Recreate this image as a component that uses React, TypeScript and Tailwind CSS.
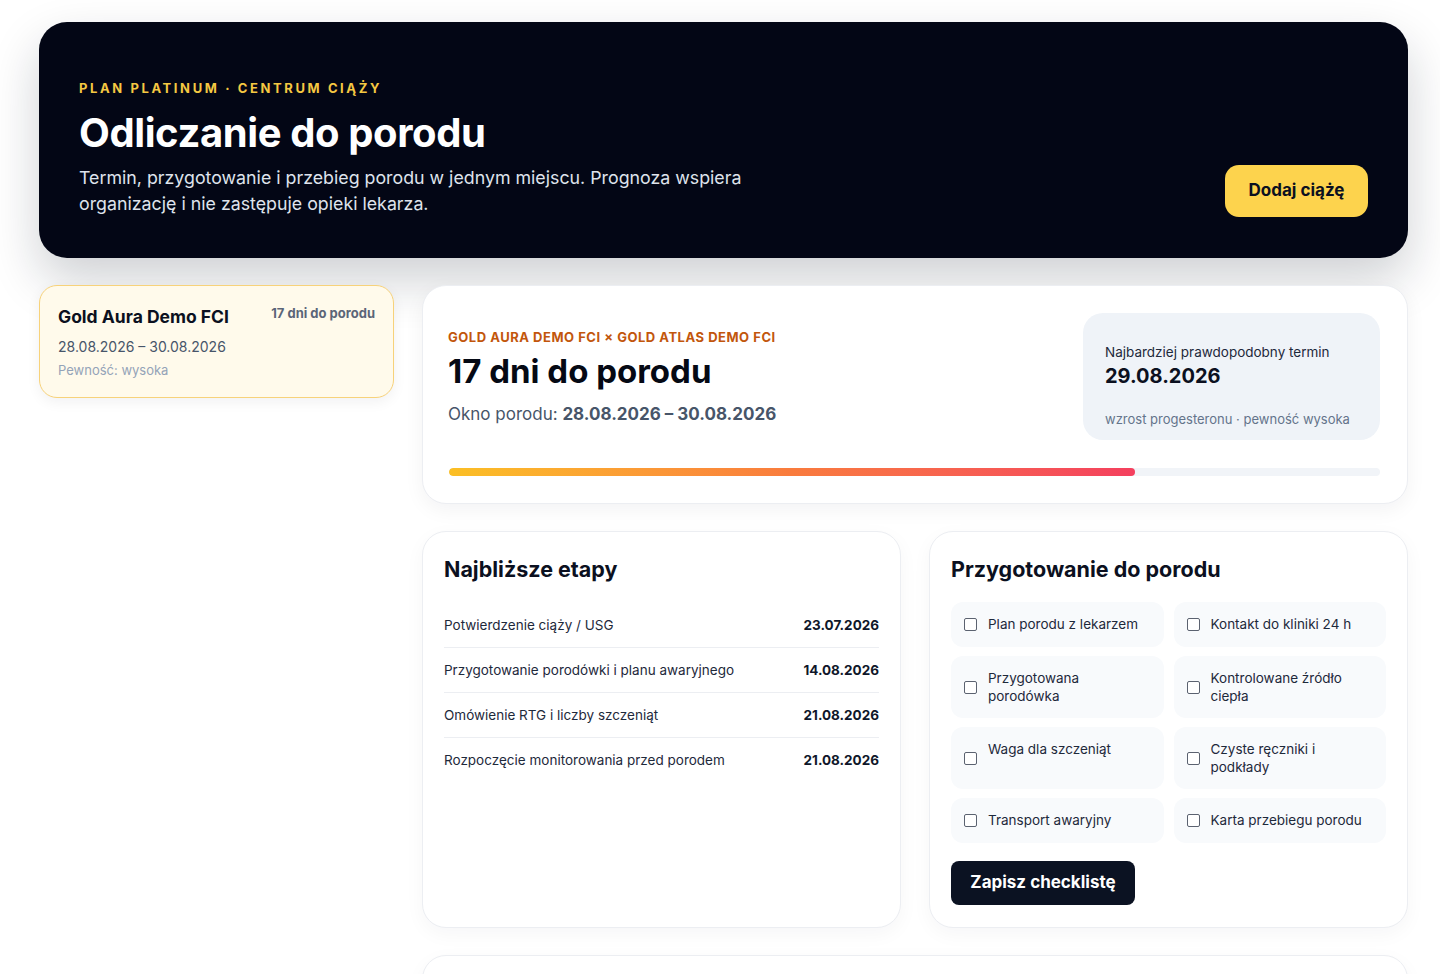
const milestones = [
  { label: 'Potwierdzenie ciąży / USG', date: '23.07.2026' },
  { label: 'Przygotowanie porodówki i planu awaryjnego', date: '14.08.2026' },
  { label: 'Omówienie RTG i liczby szczeniąt', date: '21.08.2026' },
  { label: 'Rozpoczęcie monitorowania przed porodem', date: '21.08.2026' },
];

const checklist = [
  'Plan porodu z lekarzem',
  'Kontakt do kliniki 24 h',
  'Przygotowana porodówka',
  'Kontrolowane źródło ciepła',
  'Waga dla szczeniąt',
  'Czyste ręczniki i podkłady',
  'Transport awaryjny',
  'Karta przebiegu porodu',
];

const CheckItem = ({ label }: { label: string }) => (
  <label className="flex min-h-[45px] items-center gap-[11px] rounded-xl bg-[#f8fafc] py-[13px] pl-[13px] pr-[16px]">
    <span className="h-[13px] w-[13px] shrink-0 rounded-[2px] border-[1.5px] border-[#5b6270] bg-white" />
    <span className="self-start text-[13.5px] leading-[18px] text-[#1e293b]">{label}</span>
  </label>
);

export default function App() {
  return (
    <div
      className="min-h-screen bg-white pb-10 pl-[39px] pr-[32px] pt-[22px] text-[#0f172a]"
      style={{ fontFamily: 'Inter, "Noto Sans", sans-serif' }}
    >
      {/* hero */}
      <div className="flex items-end justify-between rounded-[28px] bg-[#030615] pb-[41px] pl-[40px] pr-[40px] pt-[56px] shadow-[0_22px_50px_rgba(15,23,42,0.20)]">
        <div>
          <div className="text-[13px] font-bold leading-5 tracking-[0.2em] text-[#f5c842]">
            PLAN PLATINUM · CENTRUM CIĄŻY
          </div>
          <h1 className="mt-[11px] text-[40px] font-bold leading-[48px] tracking-[-0.01em] text-white">
            Odliczanie do porodu
          </h1>
          <p className="mt-[8px] max-w-[680px] text-[17.8px] leading-[26px] text-[#dfe3ec]">
            Termin, przygotowanie i przebieg porodu w jednym miejscu. Prognoza wspiera organizację i nie zastępuje
            opieki lekarza.
          </p>
        </div>
        <button
          type="button"
          className="h-[52px] w-[143px] rounded-[14px] bg-[#fdd34d] text-[17px] font-bold text-[#0b1020]"
        >
          Dodaj ciążę
        </button>
      </div>

      <div className="mt-[27px] flex gap-[28px]">
        {/* left column */}
        <div className="w-[355px] shrink-0">
          <div className="rounded-[18px] border border-[#f7d27a] bg-[#fffaeb] px-[18px] pb-[17px] pt-[17px] shadow-[0_4px_14px_rgba(15,23,42,0.06)]">
            <div className="flex items-start justify-between">
              <div className="text-[17.5px] font-bold leading-[28px] text-[#0b1020]">Gold Aura Demo FCI</div>
              <div className="text-[13px] font-bold leading-5 text-[#5b6578]">17 dni do porodu</div>
            </div>
            <div className="mt-[6px] text-[14px] leading-5 text-[#475569]">28.08.2026 – 30.08.2026</div>
            <div className="mt-[3px] text-[13px] leading-5 text-[#94a3b8]">Pewność: wysoka</div>
          </div>
        </div>

        {/* right column */}
        <div className="min-w-0 flex-1">
          <div className="rounded-[24px] border border-[#eceef2] bg-white py-[27px] pl-[25px] pr-[27px] shadow-[0_6px_20px_rgba(15,23,42,0.05)]">
            <div className="flex items-start justify-between">
              <div className="pt-[14px]">
                <div className="text-[13px] font-bold leading-5 tracking-[0.04em] text-[#c2560c]">
                  GOLD AURA DEMO FCI × GOLD ATLAS DEMO FCI
                </div>
                <div className="mt-[4px] text-[33px] font-bold leading-[40px] text-[#050914]">17 dni do porodu</div>
                <div className="mt-[10px] text-[17px] leading-[26px] text-[#475569]">
                  Okno porodu: <span className="font-bold">28.08.2026 – 30.08.2026</span>
                </div>
              </div>
              <div className="h-[127px] w-[297px] rounded-[20px] bg-[#eff3f8] px-[22px] pt-[30px]">
                <div className="whitespace-nowrap text-[13.5px] leading-[18px] text-[#1e293b]">
                  Najbardziej prawdopodobny termin
                </div>
                <div className="mt-[1px] text-[20px] font-bold leading-[28px] text-[#0b1020]">29.08.2026</div>
                <div className="mt-[20px] whitespace-nowrap text-[13px] leading-[18px] text-[#64748b]">
                  wzrost progesteronu · pewność wysoka
                </div>
              </div>
            </div>
            <div className="ml-[1px] mt-[28px] h-2 overflow-hidden rounded-full bg-[#f1f4f8]">
              <div
                className="h-full rounded-full bg-gradient-to-r from-[#fbbf24] via-[#f97b3d] to-[#f43f5e]"
                style={{ width: '73.7%' }}
              />
            </div>
          </div>

          <div className="mt-[27px] grid grid-cols-2 gap-[28px]">
            <div className="rounded-[24px] border border-[#eceef2] bg-white px-[21px] pb-[22px] pt-[21px] shadow-[0_6px_20px_rgba(15,23,42,0.04)]">
              <h2 className="text-[21.5px] font-bold leading-[32px] text-[#0b1020]">Najbliższe etapy</h2>
              <div className="mt-[18px]">
                {milestones.map((m, i) => (
                  <div
                    key={m.label}
                    className={
                      'flex items-center justify-between py-[12px] text-[13.5px] leading-[20px] ' +
                      (i < milestones.length - 1 ? 'border-b border-[#eceef2]' : '')
                    }
                  >
                    <span className="text-[#1e293b]">{m.label}</span>
                    <span className="font-bold text-[#0f172a]">{m.date}</span>
                  </div>
                ))}
              </div>
            </div>

            <div className="rounded-[24px] border border-[#eceef2] bg-white px-[21px] pb-[22px] pt-[21px] shadow-[0_6px_20px_rgba(15,23,42,0.04)]">
              <h2 className="text-[21.5px] font-bold leading-[32px] text-[#0b1020]">Przygotowanie do porodu</h2>
              <div className="mt-[17px] grid grid-cols-2 gap-x-[10px] gap-y-[9px]">
                {checklist.map(item => (
                  <CheckItem key={item} label={item} />
                ))}
              </div>
              <button
                type="button"
                className="mt-[18px] h-[44px] w-[184px] rounded-[8px] bg-[#0b1222] text-[17px] font-bold text-white"
              >
                Zapisz checklistę
              </button>
            </div>
          </div>

          <div className="mt-[27px] h-[240px] rounded-[24px] border border-[#eceef2] bg-white shadow-[0_6px_20px_rgba(15,23,42,0.04)]" />
        </div>
      </div>
    </div>
  );
}
